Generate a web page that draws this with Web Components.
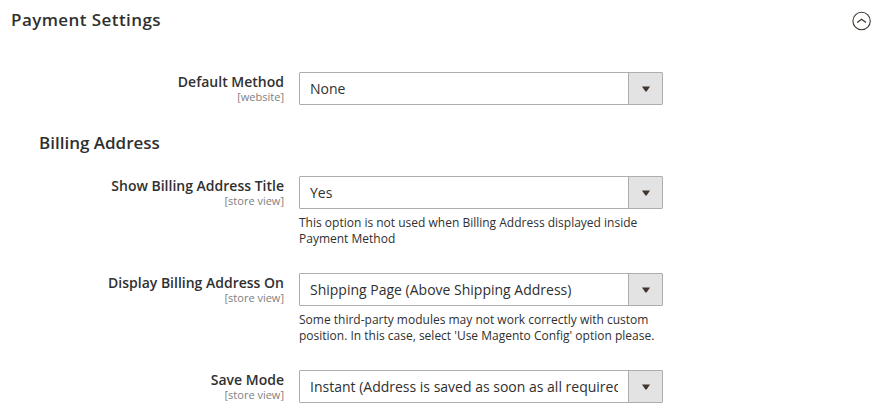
<!DOCTYPE html>
<html lang="en"><head><meta charset="utf-8"><title>Payment Settings</title>
<style>
body{margin:0;background:#fff;color:#303030;font-family:"Open Sans",sans-serif}
</style></head><body>
<settings-section heading="Payment Settings">
<config-field label="Default Method" scope="[website]" value="None"></config-field>
<sub-heading>Billing Address</sub-heading>
<config-field label="Show Billing Address Title" scope="[store view]" value="Yes">This option is not used when Billing Address displayed inside Payment Method</config-field>
<config-field label="Display Billing Address On" scope="[store view]" value="Shipping Page (Above Shipping Address)">Some third-party modules may not work correctly with custom position. In this case, select 'Use Magento Config' option please.</config-field>
<config-field label="Save Mode" scope="[store view]" value="Instant (Address is saved as soon as all required fields are filled)"></config-field>
</settings-section>
<script>
class SettingsSection extends HTMLElement{
constructor(){super();this.attachShadow({mode:'open'}).innerHTML=`<style>
:host{display:block;height:417px;overflow:hidden}
header{display:flex;justify-content:space-between;align-items:center;height:40px;padding:0 10px 0 11px;margin-bottom:32px}
h2{margin:0;font-size:17px;line-height:24px;font-weight:600;letter-spacing:.025em}
svg{display:block;margin-top:2px}
</style><header><h2>${this.getAttribute('heading')}</h2>
<svg width="20" height="20" viewBox="0 0 20 20" fill="none" stroke="#41362f"><circle cx="9.6" cy="10" r="8.7" stroke-width="1.1"/><path d="M5.2 11.6 9.6 8.3 14 11.6" stroke-width="1.3"/></svg></header><slot></slot>`}}
class SubHeading extends HTMLElement{
constructor(){super();this.attachShadow({mode:'open'}).innerHTML=`<style>
:host{display:block;font-size:17px;font-weight:600;line-height:24px;padding-left:39px;margin:0 0 21px}
</style><slot></slot>`}}
class SelectBox extends HTMLElement{
constructor(){super();this.attachShadow({mode:'open'}).innerHTML=`<style>
:host{display:flex;box-sizing:border-box;width:364px;height:33px;border:1px solid #adadad;border-radius:1px;font-size:14px;line-height:31px}
.value{flex:1;min-width:0;padding:0 10px}
.value div{overflow:hidden;white-space:nowrap}
.arrow{width:33px;border-left:1px solid #adadad;background:#e3e3e3;display:flex;align-items:center;justify-content:center}
</style><div class="value"><div><slot></slot></div></div><div class="arrow"><svg width="8" height="6" viewBox="0 0 8 6"><path d="M0 .5h8L4.6 5.6H3.4z" fill="#41362f"/></svg></div>`}}
customElements.define('select-box',SelectBox);
class ConfigField extends HTMLElement{
constructor(){super();const a=n=>this.getAttribute(n);this.attachShadow({mode:'open'}).innerHTML=`<style>
:host{display:grid;grid-template-columns:284px 364px;column-gap:15px;margin-bottom:26px}
.label{text-align:right;padding-top:2px}
.name{font-size:14px;font-weight:600;line-height:16px}
.scope{font-size:11px;line-height:13px;color:#808080}
.note{font-size:12px;line-height:16px;margin-top:6px}
</style><div class="label"><div class="name">${a('label')}</div><div class="scope">${a('scope')}</div></div>
<div><select-box>${a('value')}</select-box>${this.textContent.trim()?'<div class="note"><slot></slot></div>':''}</div>`}}
customElements.define('config-field',ConfigField);
customElements.define('sub-heading',SubHeading);
customElements.define('settings-section',SettingsSection);
</script></body></html>
